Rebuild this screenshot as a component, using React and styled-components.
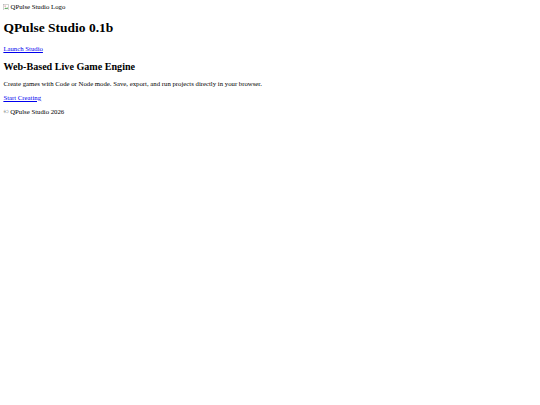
import React from "react";
import styled, { createGlobalStyle } from "styled-components";

const S = 0.421875;
const px = (v) => `${v * S}px`;

const Global = createGlobalStyle`
  html, body { background: #fff; }
  body {
    margin: ${px(8)};
    font-family: "Liberation Serif", "Times New Roman", serif;
    font-size: ${px(16)};
    color: #000;
  }
`;

const Header = styled.header`
  display: block;
`;

const LogoAlt = styled.span`
  display: inline-flex;
  align-items: center;
  gap: ${px(1)};
  font-size: ${px(16)};
  line-height: normal;
`;

const BrokenIcon = styled.svg`
  width: ${px(16)};
  height: ${px(16)};
  flex: none;
`;

const Title = styled.h1`
  font-size: ${px(32)};
  font-weight: bold;
  margin: ${px(21.44)} 0;
`;

const Subtitle = styled.h2`
  font-size: ${px(24)};
  font-weight: bold;
  margin: ${px(19.92)} 0;
`;

const Para = styled.p`
  margin: ${px(16)} 0;
`;

const Link = styled.a`
  color: #0000ee;
  text-decoration: underline;
  cursor: pointer;
`;

export default function App() {
  return (
    <>
      <Global />
      <Header>
        <LogoAlt>
          <BrokenIcon viewBox="0 0 16 16">
            <rect x="1.5" y="1.5" width="12" height="13" fill="#fff" stroke="#999" />
            <path d="M3 12 L6 8 L8 10 L10 7 L12 12 Z" fill="#6a6" />
            <circle cx="5" cy="5" r="1.5" fill="#c66" />
          </BrokenIcon>
          QPulse Studio Logo
        </LogoAlt>
        <Title>QPulse Studio 0.1b</Title>
        <Para>
          <Link href="#">Launch Studio</Link>
        </Para>
      </Header>
      <main>
        <Subtitle>Web-Based Live Game Engine</Subtitle>
        <Para>
          Create games with Code or Node mode. Save, export, and run projects
          directly in your browser.
        </Para>
        <Para>
          <Link href="#">Start Creating</Link>
        </Para>
      </main>
      <footer>
        <Para>© QPulse Studio 2026</Para>
      </footer>
    </>
  );
}
